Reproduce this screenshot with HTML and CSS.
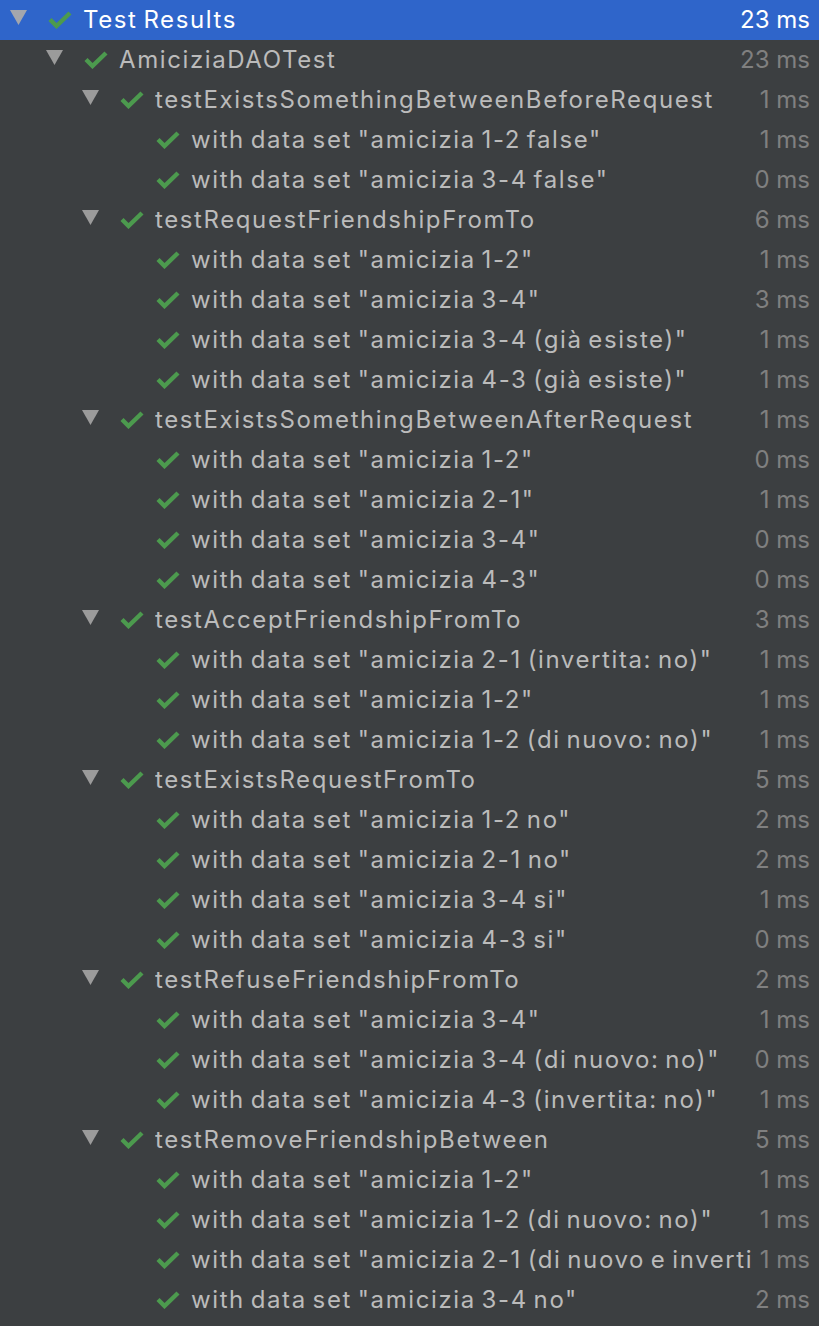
FILE: index.html
```html
<!DOCTYPE html>
<html>
<head>
<meta charset="utf-8">
<link rel="stylesheet" href="styles.css">
</head>
<body>
<svg width="0" height="0" class="defs">
  <defs>
    <symbol id="chk" viewBox="0 0 24 18"><polyline points="2,8.5 8.5,15 22,2" fill="none" stroke="#4c9a4e" stroke-width="4.4"/></symbol>
    <symbol id="tri" viewBox="0 0 17 15"><polygon points="0,0 17,0 8.5,15" fill="currentColor"/></symbol>
  </defs>
</svg>
<div class="tree">
  <div class="row lvl0 selected"><span class="toggle"><svg class="tri"><use href="#tri"/></svg></span><span class="check"><svg class="ck"><use href="#chk"/></svg></span><span class="name">Test Results</span><span class="time">23 ms</span></div>
  <div class="row lvl1"><span class="toggle"><svg class="tri"><use href="#tri"/></svg></span><span class="check"><svg class="ck"><use href="#chk"/></svg></span><span class="name">AmiciziaDAOTest</span><span class="time">23 ms</span></div>

  <div class="row lvl2"><span class="toggle"><svg class="tri"><use href="#tri"/></svg></span><span class="check"><svg class="ck"><use href="#chk"/></svg></span><span class="name">testExistsSomethingBetweenBeforeRequest</span><span class="time">1 ms</span></div>
  <div class="row lvl3"><span class="toggle"></span><span class="check"><svg class="ck"><use href="#chk"/></svg></span><span class="name">with data set "amicizia 1-2 false"</span><span class="time">1 ms</span></div>
  <div class="row lvl3"><span class="toggle"></span><span class="check"><svg class="ck"><use href="#chk"/></svg></span><span class="name">with data set "amicizia 3-4 false"</span><span class="time">0 ms</span></div>

  <div class="row lvl2"><span class="toggle"><svg class="tri"><use href="#tri"/></svg></span><span class="check"><svg class="ck"><use href="#chk"/></svg></span><span class="name">testRequestFriendshipFromTo</span><span class="time">6 ms</span></div>
  <div class="row lvl3"><span class="toggle"></span><span class="check"><svg class="ck"><use href="#chk"/></svg></span><span class="name">with data set "amicizia 1-2"</span><span class="time">1 ms</span></div>
  <div class="row lvl3"><span class="toggle"></span><span class="check"><svg class="ck"><use href="#chk"/></svg></span><span class="name">with data set "amicizia 3-4"</span><span class="time">3 ms</span></div>
  <div class="row lvl3"><span class="toggle"></span><span class="check"><svg class="ck"><use href="#chk"/></svg></span><span class="name">with data set "amicizia 3-4 (già esiste)"</span><span class="time">1 ms</span></div>
  <div class="row lvl3"><span class="toggle"></span><span class="check"><svg class="ck"><use href="#chk"/></svg></span><span class="name">with data set "amicizia 4-3 (già esiste)"</span><span class="time">1 ms</span></div>

  <div class="row lvl2"><span class="toggle"><svg class="tri"><use href="#tri"/></svg></span><span class="check"><svg class="ck"><use href="#chk"/></svg></span><span class="name">testExistsSomethingBetweenAfterRequest</span><span class="time">1 ms</span></div>
  <div class="row lvl3"><span class="toggle"></span><span class="check"><svg class="ck"><use href="#chk"/></svg></span><span class="name">with data set "amicizia 1-2"</span><span class="time">0 ms</span></div>
  <div class="row lvl3"><span class="toggle"></span><span class="check"><svg class="ck"><use href="#chk"/></svg></span><span class="name">with data set "amicizia 2-1"</span><span class="time">1 ms</span></div>
  <div class="row lvl3"><span class="toggle"></span><span class="check"><svg class="ck"><use href="#chk"/></svg></span><span class="name">with data set "amicizia 3-4"</span><span class="time">0 ms</span></div>
  <div class="row lvl3"><span class="toggle"></span><span class="check"><svg class="ck"><use href="#chk"/></svg></span><span class="name">with data set "amicizia 4-3"</span><span class="time">0 ms</span></div>

  <div class="row lvl2"><span class="toggle"><svg class="tri"><use href="#tri"/></svg></span><span class="check"><svg class="ck"><use href="#chk"/></svg></span><span class="name">testAcceptFriendshipFromTo</span><span class="time">3 ms</span></div>
  <div class="row lvl3"><span class="toggle"></span><span class="check"><svg class="ck"><use href="#chk"/></svg></span><span class="name">with data set "amicizia 2-1 (invertita: no)"</span><span class="time">1 ms</span></div>
  <div class="row lvl3"><span class="toggle"></span><span class="check"><svg class="ck"><use href="#chk"/></svg></span><span class="name">with data set "amicizia 1-2"</span><span class="time">1 ms</span></div>
  <div class="row lvl3"><span class="toggle"></span><span class="check"><svg class="ck"><use href="#chk"/></svg></span><span class="name">with data set "amicizia 1-2 (di nuovo: no)"</span><span class="time">1 ms</span></div>

  <div class="row lvl2"><span class="toggle"><svg class="tri"><use href="#tri"/></svg></span><span class="check"><svg class="ck"><use href="#chk"/></svg></span><span class="name">testExistsRequestFromTo</span><span class="time">5 ms</span></div>
  <div class="row lvl3"><span class="toggle"></span><span class="check"><svg class="ck"><use href="#chk"/></svg></span><span class="name">with data set "amicizia 1-2 no"</span><span class="time">2 ms</span></div>
  <div class="row lvl3"><span class="toggle"></span><span class="check"><svg class="ck"><use href="#chk"/></svg></span><span class="name">with data set "amicizia 2-1 no"</span><span class="time">2 ms</span></div>
  <div class="row lvl3"><span class="toggle"></span><span class="check"><svg class="ck"><use href="#chk"/></svg></span><span class="name">with data set "amicizia 3-4 si"</span><span class="time">1 ms</span></div>
  <div class="row lvl3"><span class="toggle"></span><span class="check"><svg class="ck"><use href="#chk"/></svg></span><span class="name">with data set "amicizia 4-3 si"</span><span class="time">0 ms</span></div>

  <div class="row lvl2"><span class="toggle"><svg class="tri"><use href="#tri"/></svg></span><span class="check"><svg class="ck"><use href="#chk"/></svg></span><span class="name">testRefuseFriendshipFromTo</span><span class="time">2 ms</span></div>
  <div class="row lvl3"><span class="toggle"></span><span class="check"><svg class="ck"><use href="#chk"/></svg></span><span class="name">with data set "amicizia 3-4"</span><span class="time">1 ms</span></div>
  <div class="row lvl3"><span class="toggle"></span><span class="check"><svg class="ck"><use href="#chk"/></svg></span><span class="name">with data set "amicizia 3-4 (di nuovo: no)"</span><span class="time">0 ms</span></div>
  <div class="row lvl3"><span class="toggle"></span><span class="check"><svg class="ck"><use href="#chk"/></svg></span><span class="name">with data set "amicizia 4-3 (invertita: no)"</span><span class="time">1 ms</span></div>

  <div class="row lvl2"><span class="toggle"><svg class="tri"><use href="#tri"/></svg></span><span class="check"><svg class="ck"><use href="#chk"/></svg></span><span class="name">testRemoveFriendshipBetween</span><span class="time">5 ms</span></div>
  <div class="row lvl3"><span class="toggle"></span><span class="check"><svg class="ck"><use href="#chk"/></svg></span><span class="name">with data set "amicizia 1-2"</span><span class="time">1 ms</span></div>
  <div class="row lvl3"><span class="toggle"></span><span class="check"><svg class="ck"><use href="#chk"/></svg></span><span class="name">with data set "amicizia 1-2 (di nuovo: no)"</span><span class="time">1 ms</span></div>
  <div class="row lvl3"><span class="toggle"></span><span class="check"><svg class="ck"><use href="#chk"/></svg></span><span class="name">with data set "amicizia 2-1 (di nuovo e invertita: no)"</span><span class="time">1 ms</span></div>
  <div class="row lvl3"><span class="toggle"></span><span class="check"><svg class="ck"><use href="#chk"/></svg></span><span class="name">with data set "amicizia 3-4 no"</span><span class="time">2 ms</span></div>
</div>
</body>
</html>
```

FILE: styles.css
```css
html, body {
  margin: 0;
  padding: 0;
  background: #3c3f41;
}
body {
  width: 819px;
  height: 1326px;
  overflow: hidden;
  font-family: Inter, "Open Sans", "Liberation Sans", sans-serif;
  font-size: 24px;
  color: #bbbbbb;
}
.defs {
  position: absolute;
  width: 0;
  height: 0;
}
.tree {
  display: flex;
  flex-direction: column;
}
.row {
  display: flex;
  align-items: center;
  height: 40px;
  line-height: 40px;
  white-space: nowrap;
  padding-right: 9px;
}
.row.selected {
  background: #2f65ca;
  color: #ffffff;
}
.lvl0 { padding-left: 10px; }
.lvl1 { padding-left: 46px; }
.lvl2 { padding-left: 82px; }
.lvl3 { padding-left: 118px; }
.toggle {
  flex: 0 0 38px;
  height: 40px;
  display: flex;
  align-items: flex-start;
  color: #9b9b9b;
}
.selected .toggle { color: #a3a6ad; }
.tri {
  width: 17px;
  height: 15px;
  margin-top: 10px;
}
.check {
  flex: 0 0 35px;
  height: 40px;
  display: flex;
  align-items: flex-start;
}
.ck {
  width: 24px;
  height: 18px;
  margin-top: 11px;
}
.name {
  flex: 1 1 auto;
  min-width: 0;
  overflow: hidden;
  letter-spacing: 1.6px;
  word-spacing: -2.5px;
}
.time {
  flex: 0 0 auto;
  padding-left: 7px;
  color: #808080;
}
.selected .time { color: #ffffff; }
```
